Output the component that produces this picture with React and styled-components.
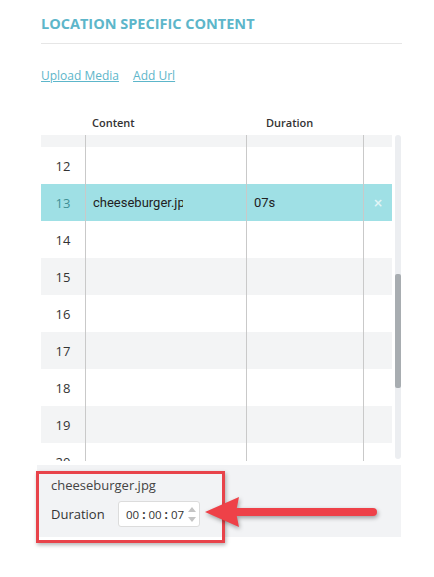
import React from 'react'
import styled, { createGlobalStyle } from 'styled-components'

const GlobalStyle = createGlobalStyle`
  body {
    margin: 0;
    background: #ffffff;
    font-family: "Open Sans", "Liberation Sans", sans-serif;
    color: #333;
  }
`

const Wrapper = styled.div`
  width: 361px;
  min-height: 577px;
  padding-left: 41px;
`

const Title = styled.h2`
  margin: 0;
  padding: 14px 0 9px;
  font-size: 14.5px;
  line-height: 20px;
  font-weight: 700;
  color: #5db6ca;
  border-bottom: 1px solid #e6e6e6;
`

const Links = styled.div`
  display: flex;
  gap: 14px;
  margin-top: 23px;
`

const Link = styled.a`
  font-size: 12px;
  line-height: 18px;
  color: #5db6ca;
  text-decoration: underline;
  cursor: pointer;
`

const HeaderRow = styled.div`
  display: grid;
  grid-template-columns: 45px 161px 117px 28px;
  height: 24px;
  margin-top: 26px;
  align-items: center;
  padding-bottom: 2px;
  box-sizing: border-box;
`

const HeaderCell = styled.div`
  font-size: 11px;
  font-weight: 600;
  color: #333;
  padding-left: ${p => p.$pad || 0}px;
`

const Body = styled.div`
  display: flex;
  gap: 3px;
  height: 326px;
`

const TableArea = styled.div`
  width: 351px;
  overflow: hidden;
`

const RowList = styled.div`
  margin-top: -25px;
`

const Row = styled.div`
  display: grid;
  grid-template-columns: 45px 161px 117px 28px;
  height: 37px;
  background: ${p => (p.$active ? '#9fe0e5' : p.$alt ? '#f3f4f5' : '#ffffff')};
`

const Cell = styled.div`
  box-sizing: border-box;
  display: flex;
  align-items: center;
  border-right: ${p => (p.$last ? 'none' : '1px solid #c9c9c9')};
  padding-left: ${p => p.$pad || 0}px;
  font-family: Roboto, "Liberation Sans", sans-serif;
  font-size: 13px;
  color: #222;
`

const NumCell = styled(Cell)`
  justify-content: center;
  padding-left: 0;
  font-family: "Open Sans", "Liberation Sans", sans-serif;
  font-size: 13px;
  color: ${p => (p.$active ? '#3f9096' : '#333')};
`

const Clip = styled.span`
  display: block;
  width: 90px;
  overflow: hidden;
  white-space: nowrap;
`

const Remove = styled.span`
  width: 100%;
  text-align: center;
  font-family: "DejaVu Sans", sans-serif;
  font-size: 12px;
  font-weight: 700;
  color: rgba(255, 255, 255, 0.7);
`

const Track = styled.div`
  width: 6px;
  height: 324px;
  border-radius: 3px;
  background: #eceef1;
`

const Thumb = styled.div`
  width: 6px;
  border-radius: 2px;
  background: #a8adb1;
`

const Panel = styled.div`
  position: relative;
  margin-top: 4px;
  margin-left: -4px;
  width: 364px;
  height: 72px;
  box-sizing: border-box;
  padding: 11px 0 0 14px;
  background: #f2f3f5;
`

const FileName = styled.div`
  font-size: 13px;
  line-height: 18px;
  color: #444;
`

const DurationRow = styled.div`
  display: flex;
  align-items: center;
  margin-top: 7px;
`

const Label = styled.span`
  width: 67px;
  font-size: 13px;
  color: #333;
`

const TimeInput = styled.div`
  display: flex;
  align-items: center;
  justify-content: space-between;
  box-sizing: border-box;
  width: 82px;
  height: 26px;
  padding: 0 3px 0 7px;
  background: #fff;
  border: 1px solid #dcdcdc;
  border-radius: 3px;
  font-size: 11.5px;
  color: #333;
`

const Colon = styled.span`
  font-weight: 700;
  margin: 0 3px;
`

const Spin = styled.div`
  display: flex;
  flex-direction: column;
  gap: 5px;
`

const Annotation = styled.div`
  position: absolute;
  left: -1px;
  top: 6px;
  width: 189px;
  height: 72px;
  box-sizing: border-box;
  border: 3px solid #e8434a;
  box-shadow: 1px 2px 4px rgba(0, 0, 0, 0.3);
  pointer-events: none;
`

const Arrow = styled.svg`
  position: absolute;
  left: 166px;
  top: 30px;
  filter: drop-shadow(1px 2px 2px rgba(0, 0, 0, 0.35));
`

const rows = [11, 12, 13, 14, 15, 16, 17, 18, 19, 20]
const scroll = { top: 139, height: 114 }

export default function App() {
  return (
    <>
      <GlobalStyle />
      <Wrapper>
        <Title>LOCATION SPECIFIC CONTENT</Title>
        <Links>
          <Link>Upload Media</Link>
          <Link>Add Url</Link>
        </Links>
        <HeaderRow>
          <HeaderCell />
          <HeaderCell $pad={6}>Content</HeaderCell>
          <HeaderCell $pad={19}>Duration</HeaderCell>
          <HeaderCell />
        </HeaderRow>
        <Body>
          <TableArea>
            <RowList>
              {rows.map(n => {
                const active = n === 13
                return (
                  <Row key={n} $active={active} $alt={n % 2 === 1}>
                    <NumCell $active={active}>{n > 11 ? n : ''}</NumCell>
                    <Cell $pad={7}>{active && <Clip>cheeseburger.jpg</Clip>}</Cell>
                    <Cell $pad={7}>{active && '07s'}</Cell>
                    <Cell $last>{active && <Remove>×</Remove>}</Cell>
                  </Row>
                )
              })}
            </RowList>
          </TableArea>
          <Track>
            <Thumb style={{ marginTop: scroll.top, height: scroll.height }} />
          </Track>
        </Body>
        <Panel>
          <FileName>cheeseburger.jpg</FileName>
          <DurationRow>
            <Label>Duration</Label>
            <TimeInput>
              <span>
                00<Colon>:</Colon>00<Colon>:</Colon>07
              </span>
              <Spin>
                <svg width="8" height="5" viewBox="0 0 8 5">
                  <path d="M0 5 L4 0 L8 5 Z" fill="#c4c4c4" />
                </svg>
                <svg width="8" height="5" viewBox="0 0 8 5">
                  <path d="M0 0 L4 5 L8 0 Z" fill="#c4c4c4" />
                </svg>
              </Spin>
            </TimeInput>
          </DurationRow>
          <Annotation />
          <Arrow width="180" height="36" viewBox="0 0 180 36">
            <line x1="34" y1="17" x2="170" y2="17" stroke="#ee4148" strokeWidth="8" strokeLinecap="round" />
            <path d="M2 17 L36 2 L33 17 L36 32 Z" fill="#ee4148" />
          </Arrow>
        </Panel>
      </Wrapper>
    </>
  )
}
